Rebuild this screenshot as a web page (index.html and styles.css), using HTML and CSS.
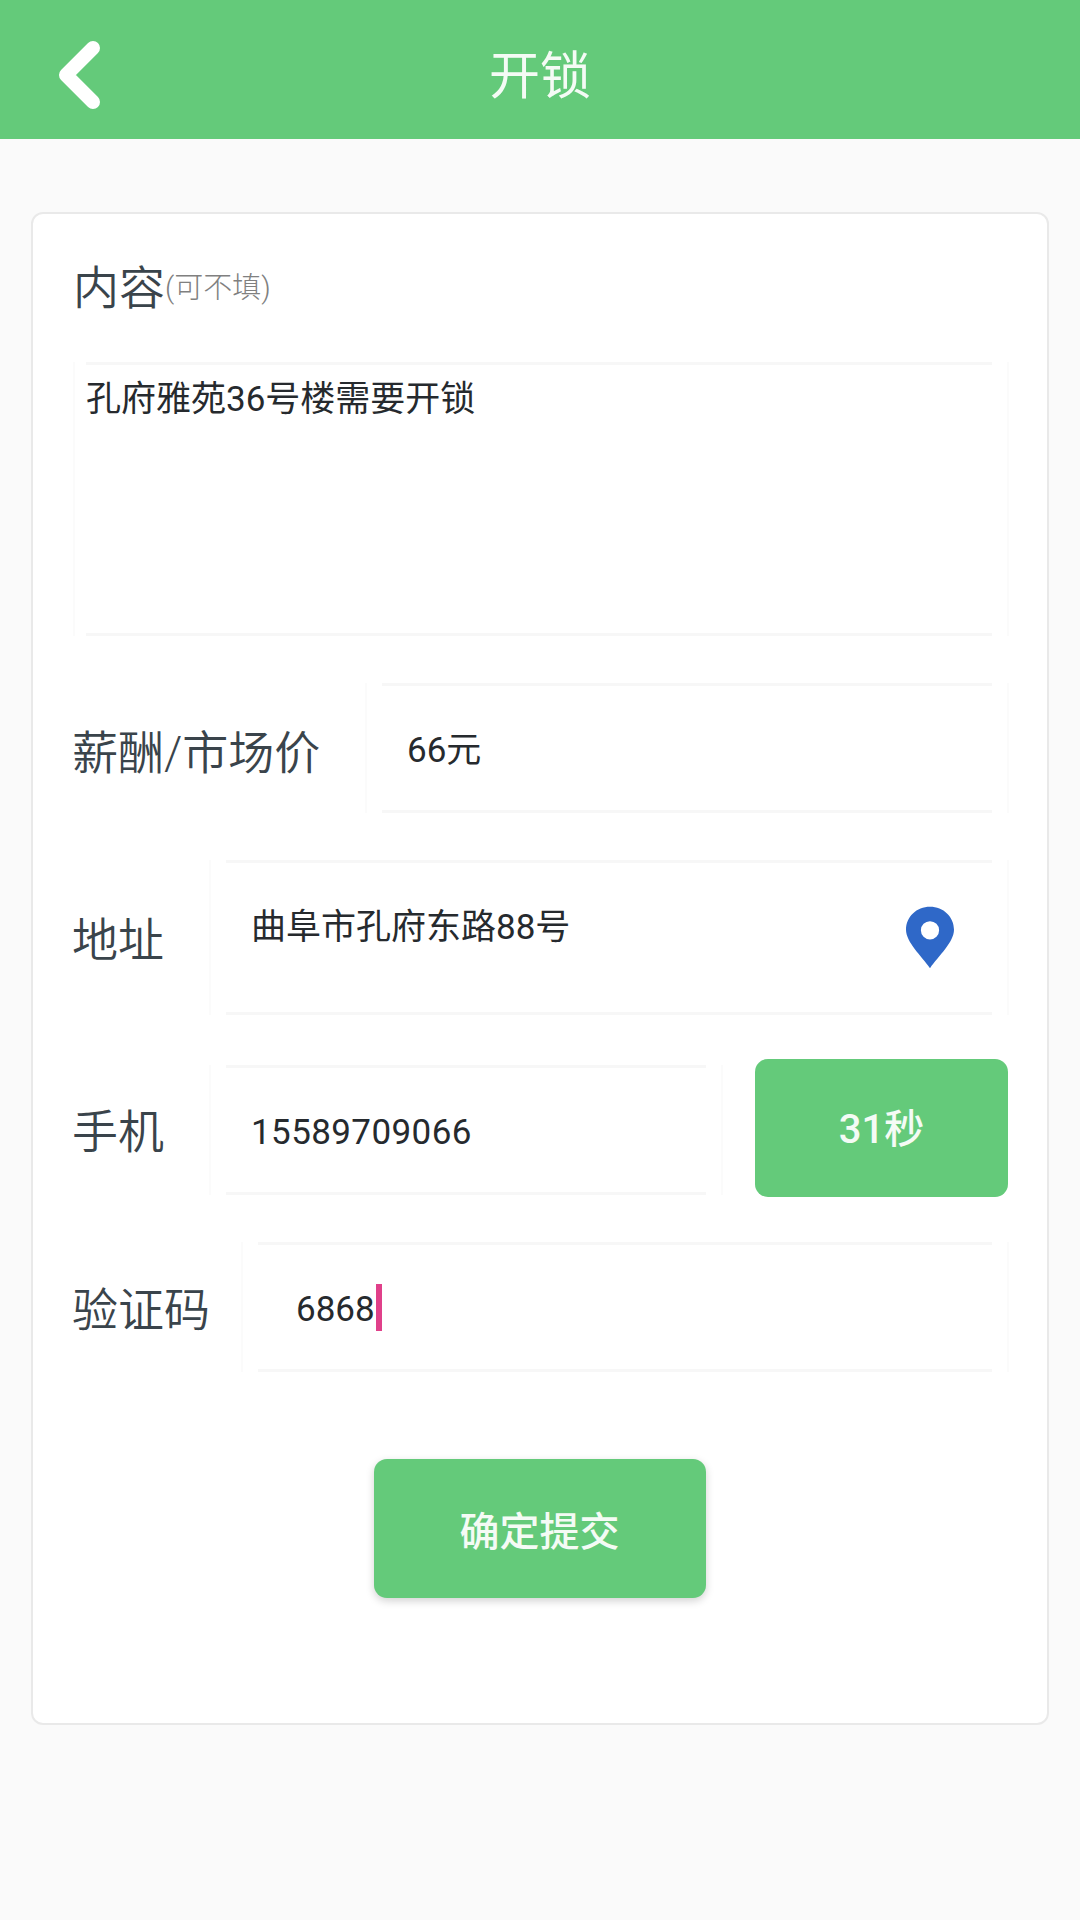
FILE: index.html
```html
<!DOCTYPE html>
<html lang="zh-CN">
<head>
<meta charset="utf-8">
<title>开锁</title>
<link rel="stylesheet" href="styles.css">
</head>
<body>
<header class="topbar">
  <svg class="back" viewBox="0 0 56 80" aria-hidden="true"><path d="M41 13 L14 40 L41 67" /></svg>
  <h1 class="title">开锁</h1>
</header>
<main class="page">
  <section class="card">
    <div class="content-label"><span class="label">内容</span><span class="hint">(可不填)</span></div>
    <div class="field field-area"><div class="field-inner"><span class="value">孔府雅苑36号楼需要开锁</span></div></div>
    <div class="row row-salary">
      <span class="label">薪酬/市场价</span>
      <div class="field"><div class="field-inner"><span class="value">66元</span></div></div>
    </div>
    <div class="row row-address">
      <span class="label">地址</span>
      <div class="field"><div class="field-inner">
        <span class="value">曲阜市孔府东路88号</span>
        <svg class="pin" viewBox="0 0 50 64" aria-hidden="true"><path fill-rule="evenodd" d="M25 0C11 0 0 10.500 0 24C0 37 16 51 25 64C34 51 50 37 50 24C50 10.500 39 0 25 0ZM25 15A9.500 9.500 0 1 1 25 34A9.500 9.500 0 1 1 25 15Z"/></svg>
      </div></div>
    </div>
    <div class="row row-phone">
      <span class="label">手机</span>
      <div class="field"><div class="field-inner"><span class="value value-phone">15589709066</span></div></div>
      <div class="btn btn-code">31秒</div>
    </div>
    <div class="row row-captcha">
      <span class="label">验证码</span>
      <div class="field"><div class="field-inner"><span class="value">6868</span><span class="caret"></span></div></div>
    </div>
    <div class="submit-wrap"><div class="btn btn-submit">确定提交</div></div>
  </section>
</main>
</body>
</html>
```
FILE: styles.css
```css
* { box-sizing: border-box; }
html, body { margin: 0; padding: 0; }
body {
  width: 1080px;
  height: 1920px;
  background: #fafafa;
  font-family: Roboto, "Noto Sans CJK SC", sans-serif;
  overflow: hidden;
}
.topbar {
  height: 139px;
  background: #64ca7a;
  display: flex;
  align-items: center;
  justify-content: center;
  position: relative;
}
.back {
  position: absolute;
  left: 52px;
  top: 35px;
  width: 56px;
  height: 80px;
  fill: none;
  stroke: #fff;
  stroke-width: 14;
  stroke-linecap: round;
  stroke-linejoin: round;
}
.title {
  margin: 0;
  font-size: 51px;
  font-weight: 400;
  color: #f4fbf5;
  line-height: 1;
  padding-top: 13px;
}
.page { padding: 73px 31px 0; }
.card {
  width: 1018px;
  height: 1513px;
  background: #fff;
  border: 2px solid #e9e9e9;
  border-radius: 12px;
  padding: 48px 38px 0 39px;
}
.label {
  font-size: 46px;
  color: #3a444b;
  line-height: 52px;
  font-weight: 350;
  white-space: nowrap;
}
.content-label { display: flex; align-items: center; height: 52px; padding-left: 1px; }
.hint { font-size: 29px; color: #808080; font-weight: 300; line-height: 52px; }
.field {
  flex: 1;
  border-left: 2px solid #fbfbfb;
  border-right: 2px solid #fbfbfb;
  padding: 0 15px;
  min-width: 0;
}
.field-inner {
  height: 100%;
  border-top: 3px solid #f7f7f7;
  border-bottom: 3px solid #f7f7f7;
  display: flex;
  align-items: center;
}
.value {
  font-size: 35px;
  color: #262a2e;
  line-height: 44px;
  white-space: nowrap;
}
.value-phone { letter-spacing: 0.4px; }
.field-area {
  height: 274px;
  margin-top: 48px;
  margin-left: 1px;
}
.field-area .field-inner { align-items: flex-start; padding: 13px 0 0; margin-left: -4px; }
.row { display: flex; align-items: center; }
.row-salary { height: 130px; margin-top: 47px; }
.row-salary .label { width: 293px; padding-top: 9px; }
.row-salary .value { margin-left: 25px; padding-top: 6px; }
.row-salary .field { height: 130px; }
.row-address { height: 155px; margin-top: 47px; }
.row-address .label { width: 137px; padding-top: 4px; }
.row-address .field { height: 155px; }
.row-address .field-inner { align-items: flex-start; justify-content: space-between; padding: 43px 38px 0 25px; }
.pin { width: 48px; height: 63px; fill: #2f68c8; flex: none; }
.row-phone { height: 138px; margin-top: 44px; }
.row-phone .label { width: 137px; padding-top: 8px; }
.row-phone .field { height: 130px; margin-top: 4px; margin-right: 32px; }
.row-phone .value { margin-left: 25px; padding-top: 6px; }
.btn {
  background: #64ca7a;
  color: #f4fbf5;
  border-radius: 13px;
  display: flex;
  align-items: center;
  justify-content: center;
}
.btn-code {
  width: 253px;
  height: 138px;
  flex: none;
  font-size: 40px;
  font-weight: 500;
  margin-right: 1px;
  padding-bottom: 4px;
}
.row-captcha { height: 130px; margin-top: 45px; }
.row-captcha .label { width: 169px; padding-top: 5px; }
.row-captcha .field { height: 130px; }
.row-captcha .value { margin-left: 38px; padding-top: 5px; }
.caret { width: 6px; height: 47px; background: #e0408a; margin-left: 1px; }
.submit-wrap { display: flex; justify-content: center; margin-top: 87px; padding-right: 2px; }
.btn-submit {
  width: 332px;
  height: 139px;
  font-size: 40px;
  font-weight: 500;
  box-shadow: 0 3px 8px rgba(0, 0, 0, 0.18);
}
```
